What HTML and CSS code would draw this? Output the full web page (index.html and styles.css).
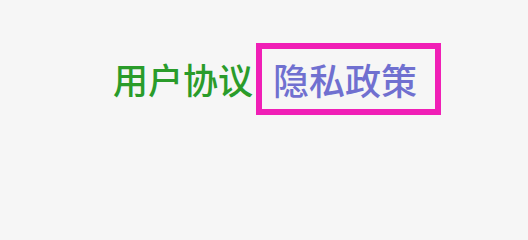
FILE: index.html
```html
<!DOCTYPE html>
<html lang="zh-CN">
<head>
<meta charset="utf-8">
<link rel="stylesheet" href="styles.css">
</head>
<body>
<div class="links">
  <span class="link link-terms">用户协议</span>
  <span class="link link-privacy">隐私政策</span>
</div>
</body>
</html>
```
FILE: styles.css
```css
html, body {
  margin: 0;
  padding: 0;
  background: #f6f6f6;
  width: 528px;
  height: 208px;
  overflow: hidden;
}
.links {
  display: flex;
  align-items: center;
  padding: 43px 0 0 113px;
  font-family: "Noto Sans CJK SC", "Noto Sans", sans-serif;
  font-weight: 500;
}
.link {
  white-space: nowrap;
}
.link-terms {
  font-size: 35px;
  line-height: 40px;
  color: #2a9c2a;
}
.link-privacy {
  margin-left: 3px;
  font-size: 36px;
  line-height: 60px;
  color: #7070d0;
  border: 6px solid #f01fb6;
  padding: 0 18px 0 11px;
}
```
